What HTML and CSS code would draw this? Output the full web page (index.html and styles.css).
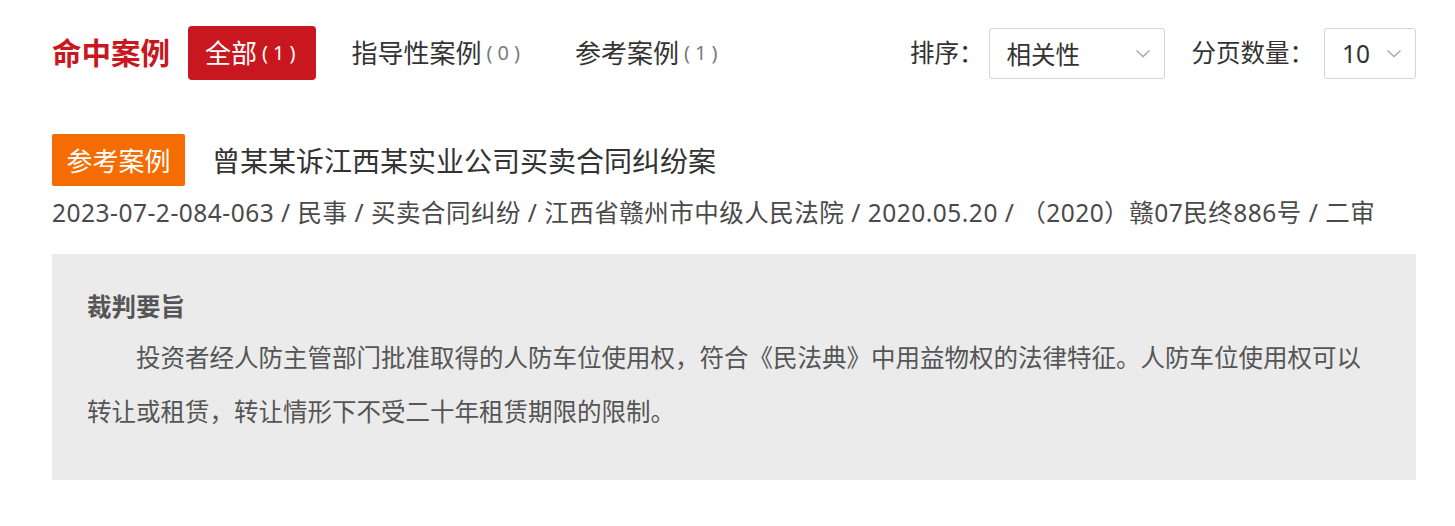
FILE: index.html
```html
<!DOCTYPE html>
<html lang="zh-CN">
<head>
<meta charset="utf-8">
<title>命中案例</title>
<link rel="stylesheet" href="styles.css">
</head>
<body>
<div class="page">
  <div class="toolbar">
    <div class="tabs">
      <span class="hit-title">命中案例</span>
      <span class="tab tab-active">全部<span class="count">(1)</span></span>
      <span class="tab">指导性案例<span class="count">(0)</span></span>
      <span class="tab">参考案例<span class="count">(1)</span></span>
    </div>
    <div class="controls">
      <span class="ctl-label">排序：</span>
      <div class="select select-sort"><span>相关性</span><svg class="chev" width="16" height="9" viewBox="0 0 16 9"><polyline points="1.5,1.5 8,7.5 14.5,1.5" fill="none" stroke="#b0b0b0" stroke-width="1.7"/></svg></div>
      <span class="ctl-label ctl-gap">分页数量：</span>
      <div class="select select-size"><span>10</span><svg class="chev" width="16" height="9" viewBox="0 0 16 9"><polyline points="1.5,1.5 8,7.5 14.5,1.5" fill="none" stroke="#b0b0b0" stroke-width="1.7"/></svg></div>
    </div>
  </div>

  <div class="result">
    <div class="result-head">
      <span class="tag">参考案例</span>
      <span class="case-title">曾某某诉江西某实业公司买卖合同纠纷案</span>
    </div>
    <div class="meta">2023-07-2-084-063 / 民事 / 买卖合同纠纷 / 江西省赣州市中级人民法院 / 2020.05.20 / （2020）赣07民终886号 / 二审</div>
    <div class="summary">
      <div class="summary-head">裁判要旨</div>
      <p class="summary-text">投资者经人防主管部门批准取得的人防车位使用权，符合《民法典》中用益物权的法律特征。人防车位使用权可以转让或租赁，转让情形下不受二十年租赁期限的限制。</p>
    </div>
  </div>
</div>
</body>
</html>
```

FILE: styles.css
```css
* { box-sizing: border-box; }
html, body { margin: 0; padding: 0; background: #fff; }
body {
  font-family: "Noto Sans", "Noto Sans CJK SC", sans-serif;
  color: #333;
}
.page {
  padding: 26px 39px 0 52px;
}
.toolbar {
  display: flex;
  align-items: center;
  justify-content: space-between;
  height: 54px;
}
.tabs {
  display: flex;
  align-items: center;
}
.hit-title {
  font-size: 29.5px;
  font-weight: 700;
  color: #c8171e;
  margin-right: 18px;
  line-height: 1;
}
.tab {
  display: flex;
  align-items: center;
  height: 54px;
  font-size: 26px;
  color: #333;
  margin-right: 50px;
  line-height: 1;
}
.tab-active {
  background: #c8171e;
  color: #fff;
  border-radius: 4px;
  padding: 0 16px 0 17px;
  margin-right: 35px;
}
.tab .count {
  font-size: 20px;
  color: #7a7a7a;
  margin-left: 5px;
  letter-spacing: 5px;
}
.tab-active .count { color: #fff; }
.tab:last-child { margin-right: 0; }
.controls {
  display: flex;
  align-items: center;
}
.ctl-label {
  font-size: 24.5px;
  color: #333;
  margin-right: 5px;
  line-height: 1;
}
.ctl-gap { margin-left: 27px; margin-right: 10px; }
.select {
  display: flex;
  align-items: center;
  justify-content: space-between;
  height: 51px;
  border: 1px solid #d4d4d4;
  border-radius: 3px;
  padding: 0 13px 0 17px;
  font-size: 24.5px;
  color: #333;
  background: #fff;
}
.select-sort { width: 176px; }
.select-size { width: 92px; }
.chev { display: block; }

.result {
  margin-top: 54px;
}
.result-head {
  display: flex;
  align-items: center;
  gap: 27px;
}
.tag {
  display: flex;
  align-items: center;
  justify-content: center;
  width: 133px;
  height: 52px;
  background: #f46c02;
  color: #fff;
  font-size: 26px;
  border-radius: 2px;
}
.case-title {
  font-size: 28px;
  color: #333;
}
.meta {
  margin-top: 9px;
  font-size: 24.5px;
  line-height: 36px;
  color: #4a4a4a;
  letter-spacing: 0.5px;
  white-space: nowrap;
}
.summary {
  margin-top: 23px;
  background: #ebebeb;
  padding: 35px 35px 41px 35px;
}
.summary-head {
  font-size: 24.5px;
  font-weight: 700;
  color: #555;
  line-height: 36px;
}
.summary-text {
  margin: 6px 0 0 0;
  font-size: 24.5px;
  line-height: 54px;
  color: #555;
  text-indent: 2em;
}
```
